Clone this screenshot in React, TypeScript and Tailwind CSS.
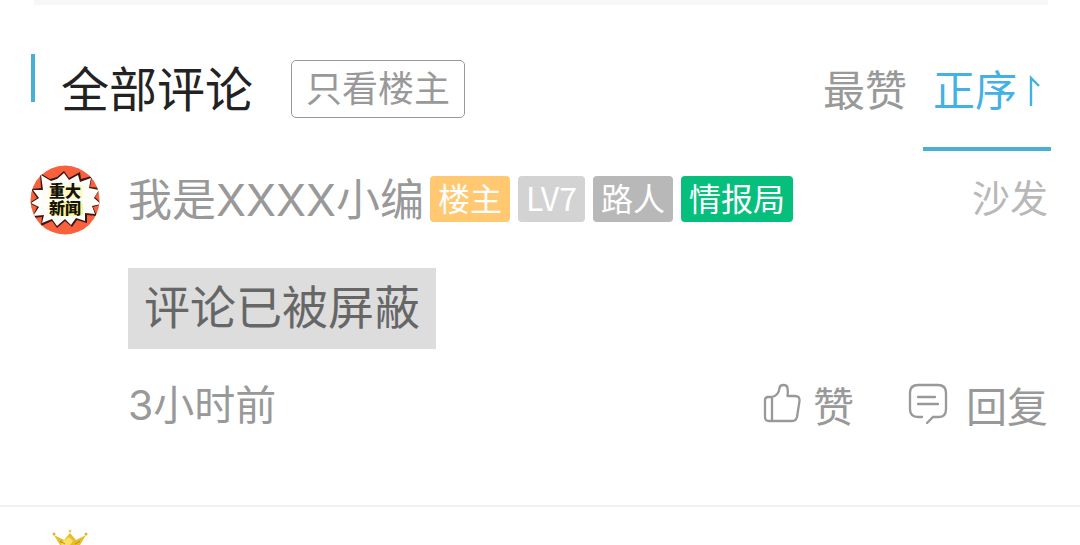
import type { ReactNode } from 'react';

function Tag({ className, children }: { className: string; children: ReactNode }) {
  return (
    <span className={`flex h-[46px] items-center rounded px-2 pb-1 font-['Noto_Sans_CJK_SC',sans-serif] text-[32px] leading-none text-white ${className}`}>
      {children}
    </span>
  );
}

function SortArrow() {
  return (
    <svg width="16" height="34" viewBox="0 0 16 34" fill="none" stroke="currentColor" strokeWidth="2.4" aria-hidden="true">
      <path d="M6 32V4L14 12" />
    </svg>
  );
}

function Avatar() {
  return (
    <svg width="70" height="70" viewBox="0 0 70 70" role="img" aria-label="重大新闻" className="shrink-0">
      <defs>
        <clipPath id="avatar-circle">
          <circle cx="35" cy="35" r="34.5" />
        </clipPath>
      </defs>
      <g clipPath="url(#avatar-circle)">
        <rect width="70" height="70" fill="#f9603c" />
        <path
          d="M10 8L20 14L27 12L34 6L39 13L50 7L51 14L62 11L60 22L71 23L65 32L72 39L63 42L67 51L57 50L57 58L47 55L42 62L35 56L27 63L22 56L11 61L12 52L2 53L7 42L-1 38L7 33L1 24L11 23Z"
          fill="#3a1714"
        />
        <path
          d="M11 10L21 16L27 14L34 8L39 15L48 10L50 17L61 13L59 23L69 25L64 33L71 39L62 41L65 49L55 48L55 56L46 53L41 60L35 54L27 61L22 54L12 58L14 50L3 51L9 42L1 38L9 33L3 25L13 25Z"
          fill="#fffef8"
        />
        <rect x="20" y="20" width="33" height="14" rx="3" fill="#fffbc4" />
        <rect x="20" y="37" width="33" height="14" rx="3" fill="#fff692" />
        <text fill="#17150b" fontFamily="'Noto Sans CJK SC', sans-serif" fontWeight="900" fontSize="16" textAnchor="middle">
          <tspan x="35" y="32">重大</tspan>
          <tspan x="35" y="49">新闻</tspan>
        </text>
      </g>
    </svg>
  );
}

function ThumbIcon() {
  return (
    <svg width="38" height="40" viewBox="0 0 38 40" fill="none" stroke="currentColor" strokeWidth="2.3" strokeLinejoin="round" strokeLinecap="round" aria-hidden="true">
      <path d="M9 14H5Q2 14 2 17V34Q2 38 6 38H29Q33 38 34 34L36.500 18Q37 13 32 13H24.500C25 10 25 8 24.500 5C24 1 17 1 16.500 5C16 10 13 13 9 14ZM9 14V38" />
    </svg>
  );
}

function ReplyIcon() {
  return (
    <svg width="40" height="42" viewBox="0 0 40 42" fill="none" stroke="currentColor" strokeWidth="2.3" strokeLinecap="round" aria-hidden="true">
      <path d="M14 34H10Q2 34 2 26V10Q2 2 10 2H30Q38 2 38 10V26Q38 34 31 34H25L19 40M10 14H27M10 21H30" />
    </svg>
  );
}

function Crown() {
  return (
    <svg width="38" height="16" viewBox="0 0 38 16" className="block" aria-hidden="true">
      <path d="M3 6L13 11L19 4L25 11L35 6L29 16H9Z" fill="#e9bd29" />
      <path d="M12 12L18 8L22 12L19 16H10Z" fill="#f8df68" />
      <path d="M9 12L14 15M29 12L24 15" stroke="#bd8c13" />
      <circle cx="3" cy="5" r="1.500" fill="#d7b643" />
      <circle cx="19" cy="2" r="1.500" fill="#e3cc72" />
      <circle cx="35" cy="5" r="1.500" fill="#d7b643" />
    </svg>
  );
}

export default function App() {
  return (
    <main className="overflow-hidden bg-white font-['Inter','Noto_Sans_CJK_SC',sans-serif] text-[#999]">
      <div className="mr-8 ml-[34px] h-[5px] bg-[#f7f7f7]" />

      <header className="mr-[29px] ml-[31px] flex items-start justify-between pt-[49px]">
        <div className="flex items-start">
          <div className="h-12 w-1 bg-[#4aafd5]" />
          <h1 className="ml-[26px] pt-3 text-[48px] leading-[48px] font-normal text-[#222]">全部评论</h1>
          <button type="button" className="mt-1.5 ml-[38px] flex h-[58px] items-center rounded-[5px] border border-[#999] px-[14px] text-[36px] leading-none">
            只看楼主
          </button>
        </div>
        <nav className="flex text-[42px] leading-[42px]" aria-label="评论排序">
          <button type="button" className="mr-4 h-[97px] pt-4 pb-10">最赞</button>
          <button type="button" aria-pressed="true" className="flex h-[97px] items-start gap-2 border-b-4 border-[#4aafd5] px-[10px] pt-4 text-[#42b1e5]">
            正序
            <span className="pt-1"><SortArrow /></span>
          </button>
        </nav>
      </header>

      <article className="mr-8 ml-[30px] flex gap-7 pt-[14px]">
        <Avatar />
        <div className="flex-1">
          <div className="flex h-[70px] items-center justify-between">
            <div className="flex items-center gap-1.5">
              <h2 className="text-[44px] leading-[60px] font-normal whitespace-nowrap">我是XXXX小编</h2>
              <div className="flex gap-2 pb-[2px]">
                <Tag className="bg-[#ffc871]">楼主</Tag>
                <Tag className="bg-[#d3d3d3]">LV7</Tag>
                <Tag className="bg-[#b8b8b8]">路人</Tag>
                <Tag className="bg-[#07bf7d]">情报局</Tag>
              </div>
            </div>
            <span className="pb-1 text-[38px] leading-none text-[#b8b8b8]">沙发</span>
          </div>

          <p className="mt-[33px] flex h-[81px] w-fit items-center bg-[#ddd] px-4 pb-1 text-[46px] leading-none text-[#666]">
            评论已被屏蔽
          </p>

          <footer className="mt-8 flex items-start justify-between text-[41px] leading-[48px]">
            <time>3小时前</time>
            <div className="flex gap-[54px]">
              <button type="button" className="flex items-start gap-3">
                <span className="pt-[2px]"><ThumbIcon /></span>
                <span className="pt-[2px]">赞</span>
              </button>
              <button type="button" className="flex items-start gap-[18px]">
                <span className="pt-[2px]"><ReplyIcon /></span>
                <span className="pt-[2px]">回复</span>
              </button>
            </div>
          </footer>
        </div>
      </article>

      <section className="mt-[74px] border-t-2 border-[#f1f1f1] pt-[22px] pl-[51px]">
        <Crown />
      </section>
    </main>
  );
}
